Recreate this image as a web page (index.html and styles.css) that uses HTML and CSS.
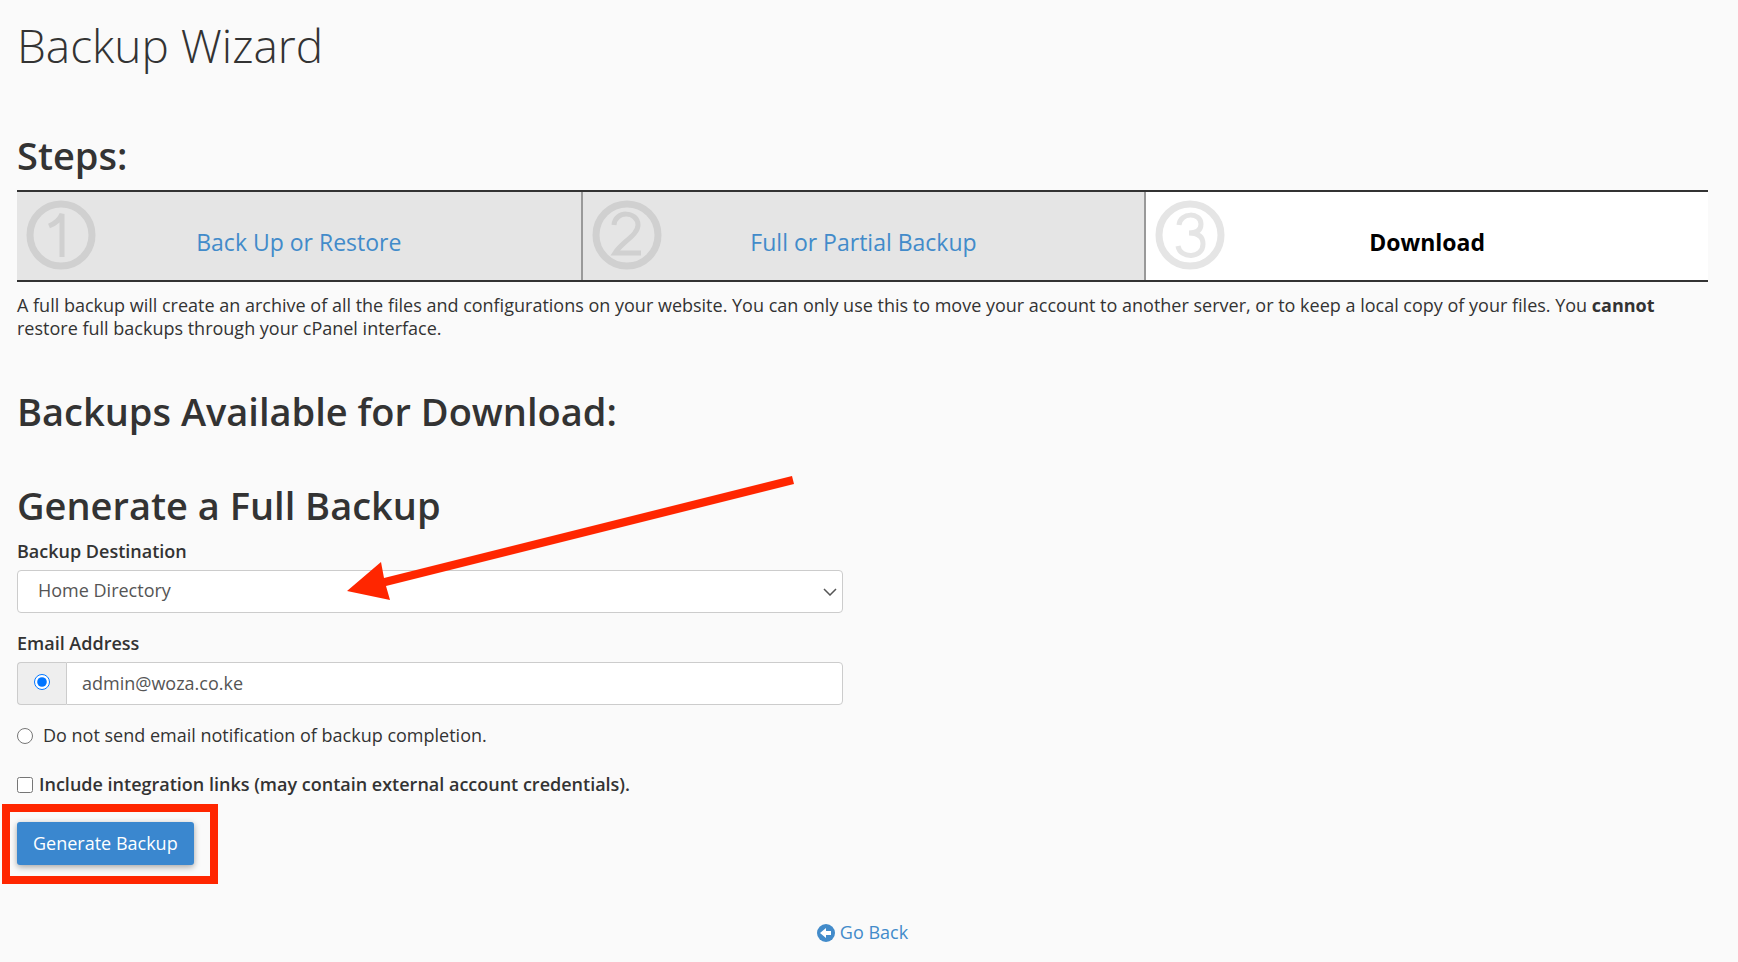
FILE: index.html
```
<!DOCTYPE html>
<html lang="en">
<head>
    <meta charset="UTF-8">
    <meta name="viewport" content="width=device-width, initial-scale=1.0">
    <title>Backup Wizard</title>
    <link rel="stylesheet" href="styles.css">
</head>
<body>
    <main class="content">
        <h1 class="page-header">Backup Wizard</h1>

        <h2>Steps:</h2>
        <ol class="steps">
            <li class="step">
                <svg class="step-number" viewBox="0 0 70 70" aria-hidden="true">
                    <circle cx="35" cy="35" r="31"/>
                    <path d="M23 26 Q33 22 36 14 V57"/>
                </svg>
                <a href="#">Back Up or Restore</a>
            </li>
            <li class="step">
                <svg class="step-number" viewBox="0 0 70 70" aria-hidden="true">
                    <circle cx="35" cy="35" r="31"/>
                    <path d="M22 25 C23 10 46 11 46 25 C46 35 30 42 23 53 H49"/>
                </svg>
                <a href="#">Full or Partial Backup</a>
            </li>
            <li class="step active">
                <svg class="step-number" viewBox="0 0 70 70" aria-hidden="true">
                    <circle cx="35" cy="35" r="31"/>
                    <path d="M24 25 C25 12 46 12 46 24 Q46 33 34 33 Q48 33 48 44 C48 59 25 59 23 46"/>
                </svg>
                <span>Download</span>
            </li>
        </ol>

        <p class="description">A full backup will create an archive of all the files and configurations on your website. You can only use this to move your account to another server, or to keep a local copy of your files. You <strong>cannot</strong> restore full backups through your cPanel interface.</p>

        <h2 class="available">Backups Available for Download:</h2>

        <form class="backup-form">
            <h2>Generate a Full Backup</h2>

            <label class="field-label" for="destination">Backup Destination</label>
            <div class="select-wrap">
                <select class="form-control" id="destination">
                    <option>Home Directory</option>
                </select>
                <svg class="chevron" viewBox="0 0 14 8" aria-hidden="true"><path d="M1 1 L7 7 L13 1"/></svg>
            </div>

            <label class="field-label" for="email">Email Address</label>
            <div class="input-group">
                <span class="addon"><input type="radio" name="notify" aria-label="Send email notification" checked></span>
                <input class="form-control" type="text" id="email" value="admin@woza.co.ke">
            </div>

            <div class="option">
                <input type="radio" name="notify" id="noEmail">
                <label for="noEmail">Do not send email notification of backup completion.</label>
            </div>
            <div class="option option-bold">
                <input type="checkbox" id="links">
                <label for="links">Include integration links (may contain external account credentials).</label>
            </div>

            <div class="highlight">
                <button type="button">Generate Backup</button>
            </div>

            <svg class="arrow" viewBox="0 0 450 130" aria-hidden="true">
                <path d="M0 117 L34 88 L37 104 L445 2 L447 10 L39 112 L43 126 Z"/>
            </svg>
        </form>

        <a class="go-back" href="#">
            <svg viewBox="0 0 18 18" aria-hidden="true">
                <circle cx="9" cy="9" r="9"/>
                <path d="M3 9 L9 4 V7 H14 V11 H9 V14 Z"/>
            </svg>
            Go Back
        </a>
    </main>
</body>
</html>
```
FILE: styles.css
```
* {
    box-sizing: border-box;
}
body {
    margin: 0;
    background-color: #fafafa;
    color: #333;
    font-family: "Open Sans", sans-serif;
    font-size: 18px;
    line-height: 23px;
}
a {
    color: #428bca;
    text-decoration: none;
}
.content {
    padding: 12px 30px 16px 17px;
}
h1, h2 {
    margin: 0;
}
.page-header {
    font-size: 46px;
    font-weight: 300;
    line-height: 66px;
    margin-bottom: 55px;
}
h2 {
    font-size: 38px;
    font-weight: 600;
    line-height: 44px;
}
.steps {
    display: grid;
    grid-template-columns: repeat(3, 1fr);
    margin: 13px 0 12px;
    padding: 0;
    list-style: none;
    border-top: 2px solid #333;
    border-bottom: 2px solid #333;
}
.step {
    position: relative;
    padding: 34px 10px 22px;
    background-color: #e5e5e5;
    font-size: 23px;
    line-height: 32px;
    text-align: center;
}
.step + .step {
    border-left: 2px solid #999;
}
.step.active {
    background-color: #fff;
    color: #000;
    font-weight: 700;
}
.step-number {
    position: absolute;
    left: 9px;
    top: 8px;
    width: 70px;
    height: 70px;
    fill: none;
    stroke: #d0d0d0;
    stroke-width: 7;
}
.step-number path {
    stroke-width: 5;
}
.step.active .step-number {
    stroke: #e5e5e5;
}
.description {
    margin: 0;
}
.available {
    margin: 49px 0 50px;
}
.backup-form {
    position: relative;
    width: calc(50% - 20px);
}
.field-label {
    display: block;
    margin: 13px 0 7px;
    font-weight: 600;
}
.form-control {
    display: block;
    width: 100%;
    height: 43px;
    padding: 0 15px 2px;
    border: 1px solid #ccc;
    border-radius: 4px;
    background-color: #fff;
    color: #555;
    font: inherit;
}
.select-wrap {
    position: relative;
    margin-bottom: 19px;
}
select.form-control {
    appearance: none;
    padding: 0 20px 2px;
}
.chevron {
    position: absolute;
    right: 6px;
    top: 18px;
    width: 14px;
    height: 8px;
    fill: none;
    stroke: #555;
    stroke-width: 1.5;
    pointer-events: none;
}
.input-group {
    display: flex;
}
.addon {
    display: flex;
    align-items: center;
    padding: 0 16px 3px;
    border: 1px solid #ccc;
    border-right: 0;
    border-radius: 4px 0 0 4px;
    background-color: #eee;
}
.input-group .form-control {
    flex: 1;
    border-radius: 0 4px 4px 0;
}
input[type="radio"], input[type="checkbox"] {
    width: 16px;
    height: 16px;
    margin: 0;
}
.option {
    display: flex;
    align-items: center;
    gap: 10px;
    margin-top: 19px;
}
.option-bold {
    gap: 6px;
    margin-top: 26px;
    font-weight: 600;
}
.highlight {
    position: relative;
    width: fit-content;
    margin-top: 26px;
}
.highlight::after {
    content: "";
    position: absolute;
    inset: -18px -24px -19px -15px;
    border: 8px solid #ff2600;
    pointer-events: none;
}
button {
    display: block;
    height: 43px;
    padding: 0 16px;
    border: 0;
    border-radius: 3px;
    background-color: #3a87cf;
    box-shadow: 0 2px 6px rgba(0, 0, 0, 0.35);
    color: #fff;
    font: inherit;
    cursor: pointer;
}
.arrow {
    position: absolute;
    left: 330px;
    top: -9px;
    width: 450px;
    height: 130px;
    fill: #ff2600;
    pointer-events: none;
}
.go-back {
    display: flex;
    align-items: center;
    justify-content: center;
    gap: 5px;
    margin-top: 56px;
}
.go-back svg {
    width: 18px;
    height: 18px;
    fill: #428bca;
}
.go-back path {
    fill: #fff;
}
```
